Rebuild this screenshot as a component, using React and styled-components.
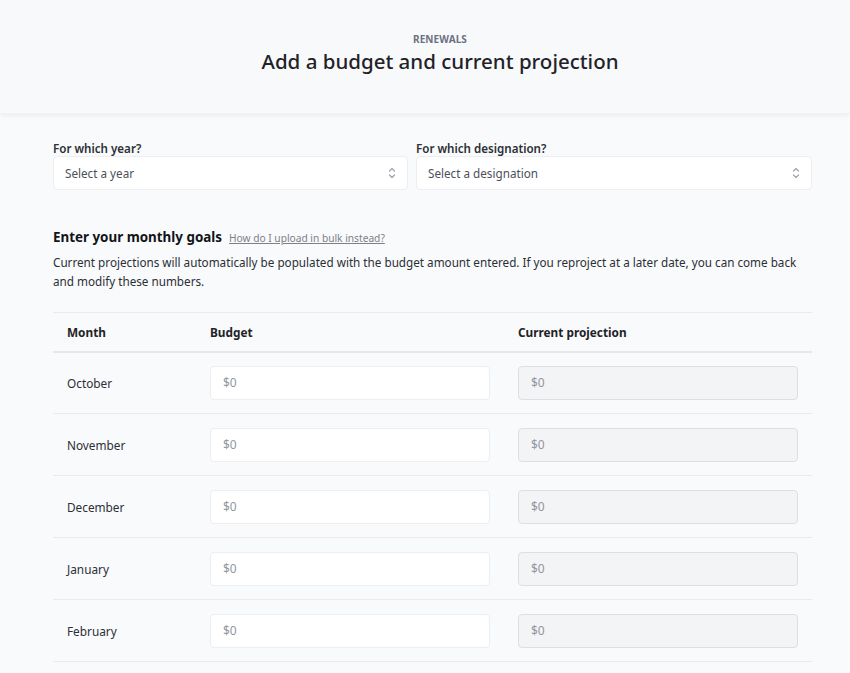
import React from 'react';
import styled, { createGlobalStyle } from 'styled-components';

const GlobalStyle = createGlobalStyle`
  html, body {
    margin: 0;
    padding: 0;
    background: #f9fafb;
    font-family: 'Noto Sans', 'Open Sans', sans-serif;
    color: #1f2328;
  }
  * { box-sizing: border-box; }
`;

const months = ['October', 'November', 'December', 'January', 'February'];

const ChevronUpDown = () => (
  <svg width="10" height="14" viewBox="0 0 10 14" fill="none" stroke="#9ca3af" strokeWidth="1.2" strokeLinecap="round" strokeLinejoin="round">
    <path d="M2.5 5 L5 2.5 L7.5 5" />
    <path d="M2.5 9 L5 11.5 L7.5 9" />
  </svg>
);

const App = () => {
  return (
    <>
      <GlobalStyle />
      <Header>
        <Eyebrow>RENEWALS</Eyebrow>
        <Title>Add a budget and current projection</Title>
      </Header>
      <Main>
        <SelectRow>
          <Field>
            <Label>For which year?</Label>
            <Select>
              <span>Select a year</span>
              <ChevronUpDown />
            </Select>
          </Field>
          <Field>
            <Label>For which designation?</Label>
            <Select>
              <span>Select a designation</span>
              <ChevronUpDown />
            </Select>
          </Field>
        </SelectRow>

        <GoalsHeading>
          <h2>Enter your monthly goals</h2>
          <HelpLink href="#">How do I upload in bulk instead?</HelpLink>
        </GoalsHeading>
        <Description>
          Current projections will automatically be populated with the budget amount entered. If you reproject at a later date, you can come back
          and modify these numbers.
        </Description>

        <Table>
          <thead>
            <tr>
              <Th>Month</Th>
              <Th>Budget</Th>
              <Th>Current projection</Th>
            </tr>
          </thead>
          <tbody>
            {months.map((m) => (
              <tr key={m}>
                <Td>{m}</Td>
                <Td><MoneyInput placeholder="$0" /></Td>
                <Td><MoneyInput placeholder="$0" disabled $readonly /></Td>
              </tr>
            ))}
          </tbody>
        </Table>
      </Main>
    </>
  );
};

const Header = styled.header`
  height: 114px;
  background: #f8f9fb;
  text-align: center;
  padding: 32px 0 0 30px;
  box-shadow: 0 3px 4px -1px rgba(0, 0, 0, 0.05);
  border-bottom: 1px solid #f0f1f3;
`;

const Eyebrow = styled.div`
  font-size: 10px;
  font-weight: 700;
  color: #6b7280;
  letter-spacing: 0.1px;
  line-height: 14px;
`;

const Title = styled.h1`
  margin: 1px 0 0;
  font-size: 20.5px;
  font-weight: 500;
  line-height: 28px;
  color: #1f2328;
`;

const Main = styled.main`
  width: 759px;
  margin: 0 0 0 53px;
  padding-top: 27px;
`;

const SelectRow = styled.div`
  display: grid;
  grid-template-columns: 355px 396px;
  gap: 8px;
`;

const Field = styled.div`
  display: flex;
  flex-direction: column;
`;

const Label = styled.label`
  font-size: 11.6px;
  font-weight: 600;
  color: #2b2f36;
  line-height: 15px;
`;

const Select = styled.div`
  height: 34px;
  background: #ffffff;
  border: 1px solid #eceef1;
  border-radius: 4px;
  display: flex;
  align-items: center;
  justify-content: space-between;
  padding: 0 10px 0 11px;
  font-size: 11.7px;
  color: #4b5058;
`;

const GoalsHeading = styled.div`
  display: flex;
  align-items: baseline;
  gap: 7px;
  margin-top: 37px;

  h2 {
    margin: 0;
    font-size: 13.4px;
    font-weight: 700;
    color: #111418;
    line-height: 20px;
  }
`;

const HelpLink = styled.a`
  font-size: 10.2px;
  color: #7b8089;
  text-decoration: underline;
`;

const Description = styled.p`
  margin: 6px 0 0;
  font-size: 11.7px;
  line-height: 19px;
  color: #2b2f36;
`;

const Table = styled.table`
  width: 100%;
  margin-top: 21px;
  border-collapse: collapse;
  table-layout: fixed;

  th:nth-child(1), td:nth-child(1) { width: 143px; }
  th:nth-child(2), td:nth-child(2) { width: 308px; }
  th:nth-child(3), td:nth-child(3) { width: 308px; }

  thead tr {
    border-top: 1px solid #e8eaed;
    border-bottom: 2px solid #e5e7ea;
  }

  tbody tr {
    border-bottom: 1px solid #e8eaed;
  }
`;

const Th = styled.th`
  height: 39px;
  text-align: left;
  padding: 0 14px;
  font-size: 11.8px;
  font-weight: 700;
  color: #1f2328;
`;

const Td = styled.td`
  height: 62px;
  padding: 0 14px;
  font-size: 11.8px;
  color: #2b2f36;
  vertical-align: middle;
`;

const MoneyInput = styled.input`
  width: 280px;
  height: 34px;
  border-radius: 4px;
  border: 1px solid ${(p) => (p.$readonly ? '#dcdfe3' : '#eceef1')};
  background: ${(p) => (p.$readonly ? '#f3f4f6' : '#ffffff')};
  padding: 0 12px;
  font-family: inherit;
  font-size: 12px;
  color: #2b2f36;
  outline: none;

  &::placeholder {
    color: #9197a0;
  }
`;

export default App;
